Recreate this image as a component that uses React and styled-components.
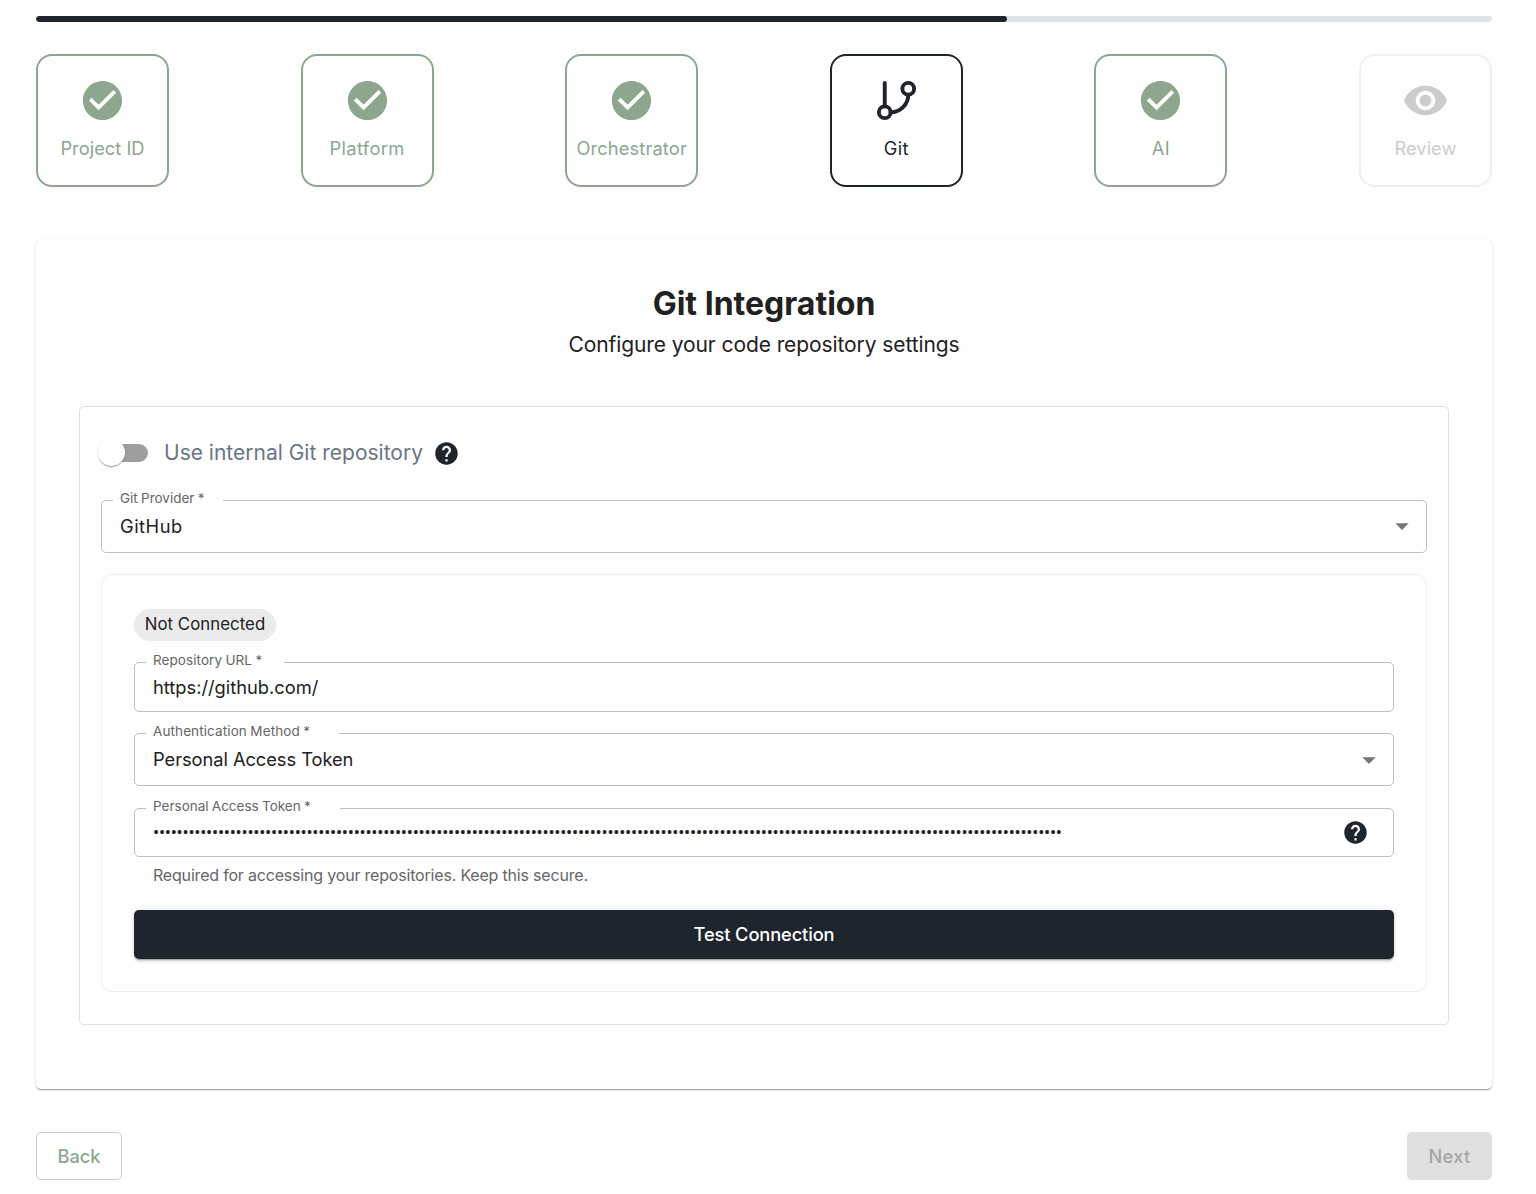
import React from "react";
import styled, { createGlobalStyle } from "styled-components";
import { MdCheckCircle, MdVisibility, MdHelp, MdArrowDropDown } from "react-icons/md";

const GlobalStyle = createGlobalStyle`
  *, *::before, *::after { box-sizing: border-box; }
  body {
    margin: 0;
    background: #fefefe;
    color: #212121;
    font-family: Inter, "Liberation Sans", sans-serif;
  }
`;

const ink = "#1e252d";
const sage = "#8da78f";

const Page = styled.main`
  display: flex;
  flex-direction: column;
  width: 1536px;
  height: 1194px;
  padding: 16px 44px 0 36px;
`;

const Progress = styled.div`
  height: 6px;
  border-radius: 3px;
  background: #e0e3e8;
  overflow: hidden;
`;

const ProgressFill = styled.div`
  width: 66.67%;
  height: 100%;
  border-radius: 3px;
  background: ${ink};
`;

const Steps = styled.nav`
  display: flex;
  justify-content: space-between;
  margin-top: 32px;
`;

const stepColors = {
  done: { border: sage, text: sage },
  active: { border: ink, text: ink },
  disabled: { border: "#f0f0f0", text: "#cccccc" },
};

const Step = styled.div`
  display: flex;
  flex-direction: column;
  align-items: center;
  gap: 13px;
  width: 133px;
  height: 133px;
  padding-top: 21px;
  border: 2px solid ${(p) => stepColors[p.$state].border};
  border-radius: 16px;
  color: ${(p) => stepColors[p.$state].text};

  svg {
    display: block;
    flex: none;
    width: 47px;
    height: 47px;
  }
`;

const Text = styled.span`
  letter-spacing: ${(p) => p.$track || 0}px;
  white-space: nowrap;
`;

const StepLabel = styled(Text)`
  font-size: 18.3px;
  line-height: 22px;
`;

const Card = styled.section`
  display: flex;
  flex-direction: column;
  height: 849px;
  margin-top: 53px;
  padding: 44px 43px 0;
  border-radius: 5px;
  background: #fefefe;
  box-shadow: 0 2px 1px -1px rgba(0, 0, 0, 0.2), 0 1px 1px 0 rgba(0, 0, 0, 0.14),
    0 1px 3px 0 rgba(0, 0, 0, 0.12);
`;

const Title = styled.h1`
  margin: 0;
  font-size: 32px;
  font-weight: 700;
  line-height: 40px;
  letter-spacing: 0;
  text-align: center;
`;

const Subtitle = styled.p`
  margin: 5px 0 45px;
  font-size: 21px;
  line-height: 32px;
  letter-spacing: -0.09px;
  text-align: center;
`;

const Panel = styled.div`
  display: flex;
  flex-direction: column;
  padding: 26px 21px 32px;
  border: 1px solid #e0e0e0;
  border-radius: 5px;
`;

const SwitchRow = styled.div`
  display: flex;
  align-items: center;
  height: 40px;
  margin-bottom: 27px;
`;

const SwitchTrack = styled.div`
  display: flex;
  align-items: center;
  width: 46px;
  height: 18px;
  margin-left: 1px;
  border-radius: 9px;
  background: #9e9e9e;
`;

const SwitchThumb = styled.div`
  flex: none;
  width: 27px;
  height: 27px;
  margin: 0 0 1px -4px;
  border-radius: 50%;
  background: #fff;
  box-shadow: 0 2px 1px -1px rgba(0, 0, 0, 0.2), 0 1px 1px 0 rgba(0, 0, 0, 0.14),
    0 1px 3px 0 rgba(0, 0, 0, 0.12);
`;

const SwitchLabel = styled(Text)`
  margin: 0 10px 0 16px;
  padding-bottom: 2px;
  color: #6a7685;
  font-size: 21px;
`;

const HelpIcon = styled(MdHelp)`
  display: block;
  flex: none;
  width: 27px;
  height: 27px;
  color: ${ink};
`;

const FieldBox = styled.div`
  position: relative;
  display: flex;
  align-items: center;
  justify-content: space-between;
  height: ${(p) => p.$height}px;
  padding: 0 ${(p) => p.$end || 8}px 0 18px;
  border: 1px solid #c0c0c0;
  border-radius: 5px;
`;

const FieldLabel = styled(Text)`
  position: absolute;
  top: -12px;
  left: 11px;
  width: ${(p) => p.$notch}px;
  padding-left: 7px;
  background: #fefefe;
  color: #666;
  font-size: 13.5px;
  line-height: 18px;
  word-spacing: -0.5px;
`;

const FieldValue = styled(Text)`
  font-size: 18.3px;
  line-height: 24px;
`;

const SelectValue = styled(FieldValue)`
  padding-bottom: 2px;
`;

const MaskedValue = styled.span`
  font-family: Roboto, sans-serif;
  font-size: 18.3px;
  line-height: 24px;
  letter-spacing: -0.267px;
  white-space: nowrap;
`;

const Arrow = styled(MdArrowDropDown)`
  display: block;
  width: 32px;
  height: 32px;
  margin-bottom: ${(p) => (p.$raised ? 2 : 0)}px;
  color: #757575;
`;

const Connection = styled.div`
  display: flex;
  flex-direction: column;
  gap: 21px;
  margin-top: 21px;
  padding: 34px 32px 32px;
  border: 1px solid #eee;
  border-radius: 11px;
`;

const Chip = styled.div`
  display: flex;
  align-items: center;
  justify-content: center;
  align-self: flex-start;
  width: 142px;
  height: 32px;
  padding-bottom: 2px;
  border-radius: 16px;
  background: #ebebeb;
  font-size: 16.8px;
`;

const TokenGroup = styled.div`
  display: flex;
  flex-direction: column;
  gap: 6px;
  margin: 1px 0 2px;
`;

const Helper = styled(Text)`
  padding-left: 19px;
  color: #666;
  font-size: 16px;
  line-height: 24px;
`;

const Button = styled.button`
  display: flex;
  align-items: center;
  justify-content: center;
  width: ${(p) => p.$width || "100%"};
  height: ${(p) => p.$height}px;
  padding: 0 0 ${(p) => (p.$kind === "primary" ? 2 : 0)}px;
  border: ${(p) => (p.$kind === "outlined" ? "1px solid #c3d1c4" : "0")};
  border-radius: 5px;
  background: ${(p) => ({ outlined: "transparent", primary: ink, disabled: "#e0e0e0" })[p.$kind]};
  color: ${(p) => ({ outlined: sage, primary: "#fff", disabled: "#a6a6a6" })[p.$kind]};
  box-shadow: ${(p) =>
    p.$kind === "primary"
      ? "0 3px 1px -2px rgba(0,0,0,.2), 0 2px 2px 0 rgba(0,0,0,.14), 0 1px 5px 0 rgba(0,0,0,.12)"
      : "none"};
  font-family: inherit;
  font-size: 18.3px;
  font-weight: 500;
`;

const Footer = styled.footer`
  display: flex;
  justify-content: space-between;
  margin-top: 43px;
`;

const BranchIcon = () => (
  <svg viewBox="0 0 24 24" fill="none" stroke="currentColor" strokeWidth="2" strokeLinecap="round" strokeLinejoin="round">
    <path d="M6 3v12" />
    <circle cx="18" cy="6" r="3" />
    <circle cx="6" cy="18" r="3" />
    <path d="M18 9a9 9 0 0 1-9 9" />
  </svg>
);

const steps = [
  { label: "Project ID", state: "done", Icon: MdCheckCircle, track: 0.02 },
  { label: "Platform", state: "done", Icon: MdCheckCircle, track: 0.35 },
  { label: "Orchestrator", state: "done", Icon: MdCheckCircle, track: 0.13 },
  { label: "Git", state: "active", Icon: BranchIcon, track: 0.4 },
  { label: "AI", state: "done", Icon: MdCheckCircle, track: 0.4 },
  { label: "Review", state: "disabled", Icon: MdVisibility, track: 0.03 },
];

const Field = ({ label, notch, height, labelTrack, end, children }) => (
  <FieldBox $height={height} $end={end}>
    <FieldLabel $notch={notch} $track={labelTrack}>{label} *</FieldLabel>
    {children}
  </FieldBox>
);

export default function App() {
  return (
    <>
      <GlobalStyle />
      <Page>
        <Progress>
          <ProgressFill />
        </Progress>
        <Steps>
          {steps.map(({ label, state, Icon, track }) => (
            <Step key={label} $state={state}>
              <Icon />
              <StepLabel $track={track}>{label}</StepLabel>
            </Step>
          ))}
        </Steps>
        <Card>
          <Title>Git Integration</Title>
          <Subtitle>Configure your code repository settings</Subtitle>
          <Panel>
            <SwitchRow>
              <SwitchTrack>
                <SwitchThumb />
              </SwitchTrack>
              <SwitchLabel>Use internal Git repository</SwitchLabel>
              <HelpIcon />
            </SwitchRow>
            <Field label="Git Provider" notch={110} height={53}>
              <SelectValue $track={0.5}>GitHub</SelectValue>
              <Arrow $raised />
            </Field>
            <Connection>
              <Chip>
                <Text $track={0.05}>Not Connected</Text>
              </Chip>
              <Field label="Repository URL" notch={138} height={50} labelTrack={0.07}>
                <FieldValue>https://github.com/</FieldValue>
              </Field>
              <Field label="Authentication Method" notch={193} height={53} labelTrack={0.11}>
                <SelectValue $track={-0.05}>Personal Access Token</SelectValue>
                <Arrow />
              </Field>
              <TokenGroup>
                <Field label="Personal Access Token" notch={194} height={49} end={24}>
                  <MaskedValue>{"•".repeat(154)}</MaskedValue>
                  <HelpIcon />
                </Field>
                <Helper $track={-0.19}>Required for accessing your repositories. Keep this secure.</Helper>
              </TokenGroup>
              <Button $kind="primary" $height={49}>
                <Text $track={-0.13}>Test Connection</Text>
              </Button>
            </Connection>
          </Panel>
        </Card>
        <Footer>
          <Button $kind="outlined" $width="86px" $height={48}>
            <Text>Back</Text>
          </Button>
          <Button $kind="disabled" $width="85px" $height={48} disabled>
            <Text $track={0.3}>Next</Text>
          </Button>
        </Footer>
      </Page>
    </>
  );
}
